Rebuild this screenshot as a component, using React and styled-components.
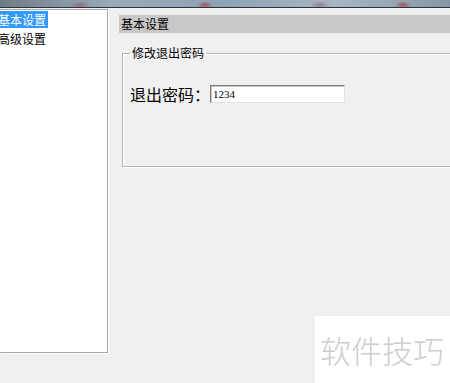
import styled, { createGlobalStyle } from "styled-components";

const Global = createGlobalStyle`
  html, body {
    margin: 0;
    padding: 0;
    background: #f0f0f0;
  }
`;

const Screen = styled.div`
  position: relative;
  width: 450px;
  height: 383px;
  overflow: hidden;
  background: #f0f0f0;
  font-family: "Noto Sans CJK SC", "Liberation Sans", sans-serif;
  font-size: 12px;
  color: #000;
`;

const Backdrop = styled.div`
  height: 7px;
  border-bottom: 1px solid #2c333b;
  background:
    radial-gradient(ellipse 10px 4px at 80px 5px, rgba(150, 70, 80, 0.6), transparent),
    radial-gradient(ellipse 8px 4px at 205px 5px, rgba(170, 50, 60, 0.7), transparent),
    radial-gradient(ellipse 10px 4px at 320px 5px, rgba(150, 70, 80, 0.5), transparent),
    radial-gradient(ellipse 8px 4px at 403px 5px, rgba(170, 50, 60, 0.7), transparent),
    linear-gradient(90deg, #6f7c88 0%, #9aaab8 25%, #8fa3b5 50%, #a7b6c2 75%, #8597a6 100%);
`;

const Body = styled.div`
  display: flex;
  height: 375px;
`;

const TreePanel = styled.div`
  box-sizing: border-box;
  width: 108px;
  height: 344px;
  margin-top: 1px;
  background: #fff;
  border: 1px solid #a9a9a9;
  border-left: none;
  box-shadow: 1px 1px 0 #fff;
  padding-top: 1px;
  overflow: hidden;
`;

const TreeRow = styled.div`
  height: 19px;
`;

const TreeItem = styled.div`
  display: inline-block;
  margin-left: -3px;
  padding: 0 2px 0 1px;
  height: 17px;
  line-height: 17px;
  white-space: nowrap;
  background: ${(p) => (p.$selected ? "#3399ff" : "transparent")};
  color: ${(p) => (p.$selected ? "#fff" : "#000")};
`;

const Pane = styled.div`
  flex: 1;
  padding: 7px 0 0 11px;
`;

const Header = styled.div`
  height: 18px;
  line-height: 18px;
  padding-left: 2px;
  background: #c8c8c8;
`;

const Group = styled.fieldset`
  box-sizing: border-box;
  height: 121px;
  margin: 13px -10px 0 3px;
  padding: 0 0 0 7px;
  border: 1px solid #b4b4b4;
  box-shadow: inset 1px 1px 0 #fff, 1px 1px 0 #fff;
`;

const Legend = styled.legend`
  padding: 0 2px;
  line-height: 14px;
  font-size: 12px;
`;

const Field = styled.div`
  display: flex;
  align-items: center;
  margin-top: 25px;
  height: 18px;
`;

const Label = styled.label`
  width: 80px;
  font-size: 16px;
  line-height: 18px;
  white-space: nowrap;
`;

const Input = styled.div`
  box-sizing: border-box;
  width: 135px;
  height: 18px;
  background: #fff;
  border: 1px solid #e3e3e3;
  border-top-color: #7a7a7a;
  border-left-color: #7a7a7a;
  box-shadow: inset 1px 1px 0 #c4c4c4;
  padding-left: 2px;
  font-family: "Liberation Serif", serif;
  font-size: 11px;
  line-height: 16px;
`;

const Watermark = styled.div`
  position: absolute;
  right: 0;
  bottom: 0;
  width: 135px;
  height: 67px;
  background: #fff;
  color: #cdcdcd;
  font-size: 31px;
  font-weight: 300;
  line-height: 31px;
  padding: 18px 0 0 5px;
  box-sizing: border-box;
  white-space: nowrap;
`;

export default function App() {
  return (
    <Screen>
      <Global />
      <Backdrop />
      <Body>
        <TreePanel>
          <TreeRow>
            <TreeItem $selected>基本设置</TreeItem>
          </TreeRow>
          <TreeRow>
            <TreeItem>高级设置</TreeItem>
          </TreeRow>
        </TreePanel>
        <Pane>
          <Header>基本设置</Header>
          <Group>
            <Legend>修改退出密码</Legend>
            <Field>
              <Label>退出密码：</Label>
              <Input>1234</Input>
            </Field>
          </Group>
        </Pane>
      </Body>
      <Watermark>软件技巧</Watermark>
    </Screen>
  );
}
